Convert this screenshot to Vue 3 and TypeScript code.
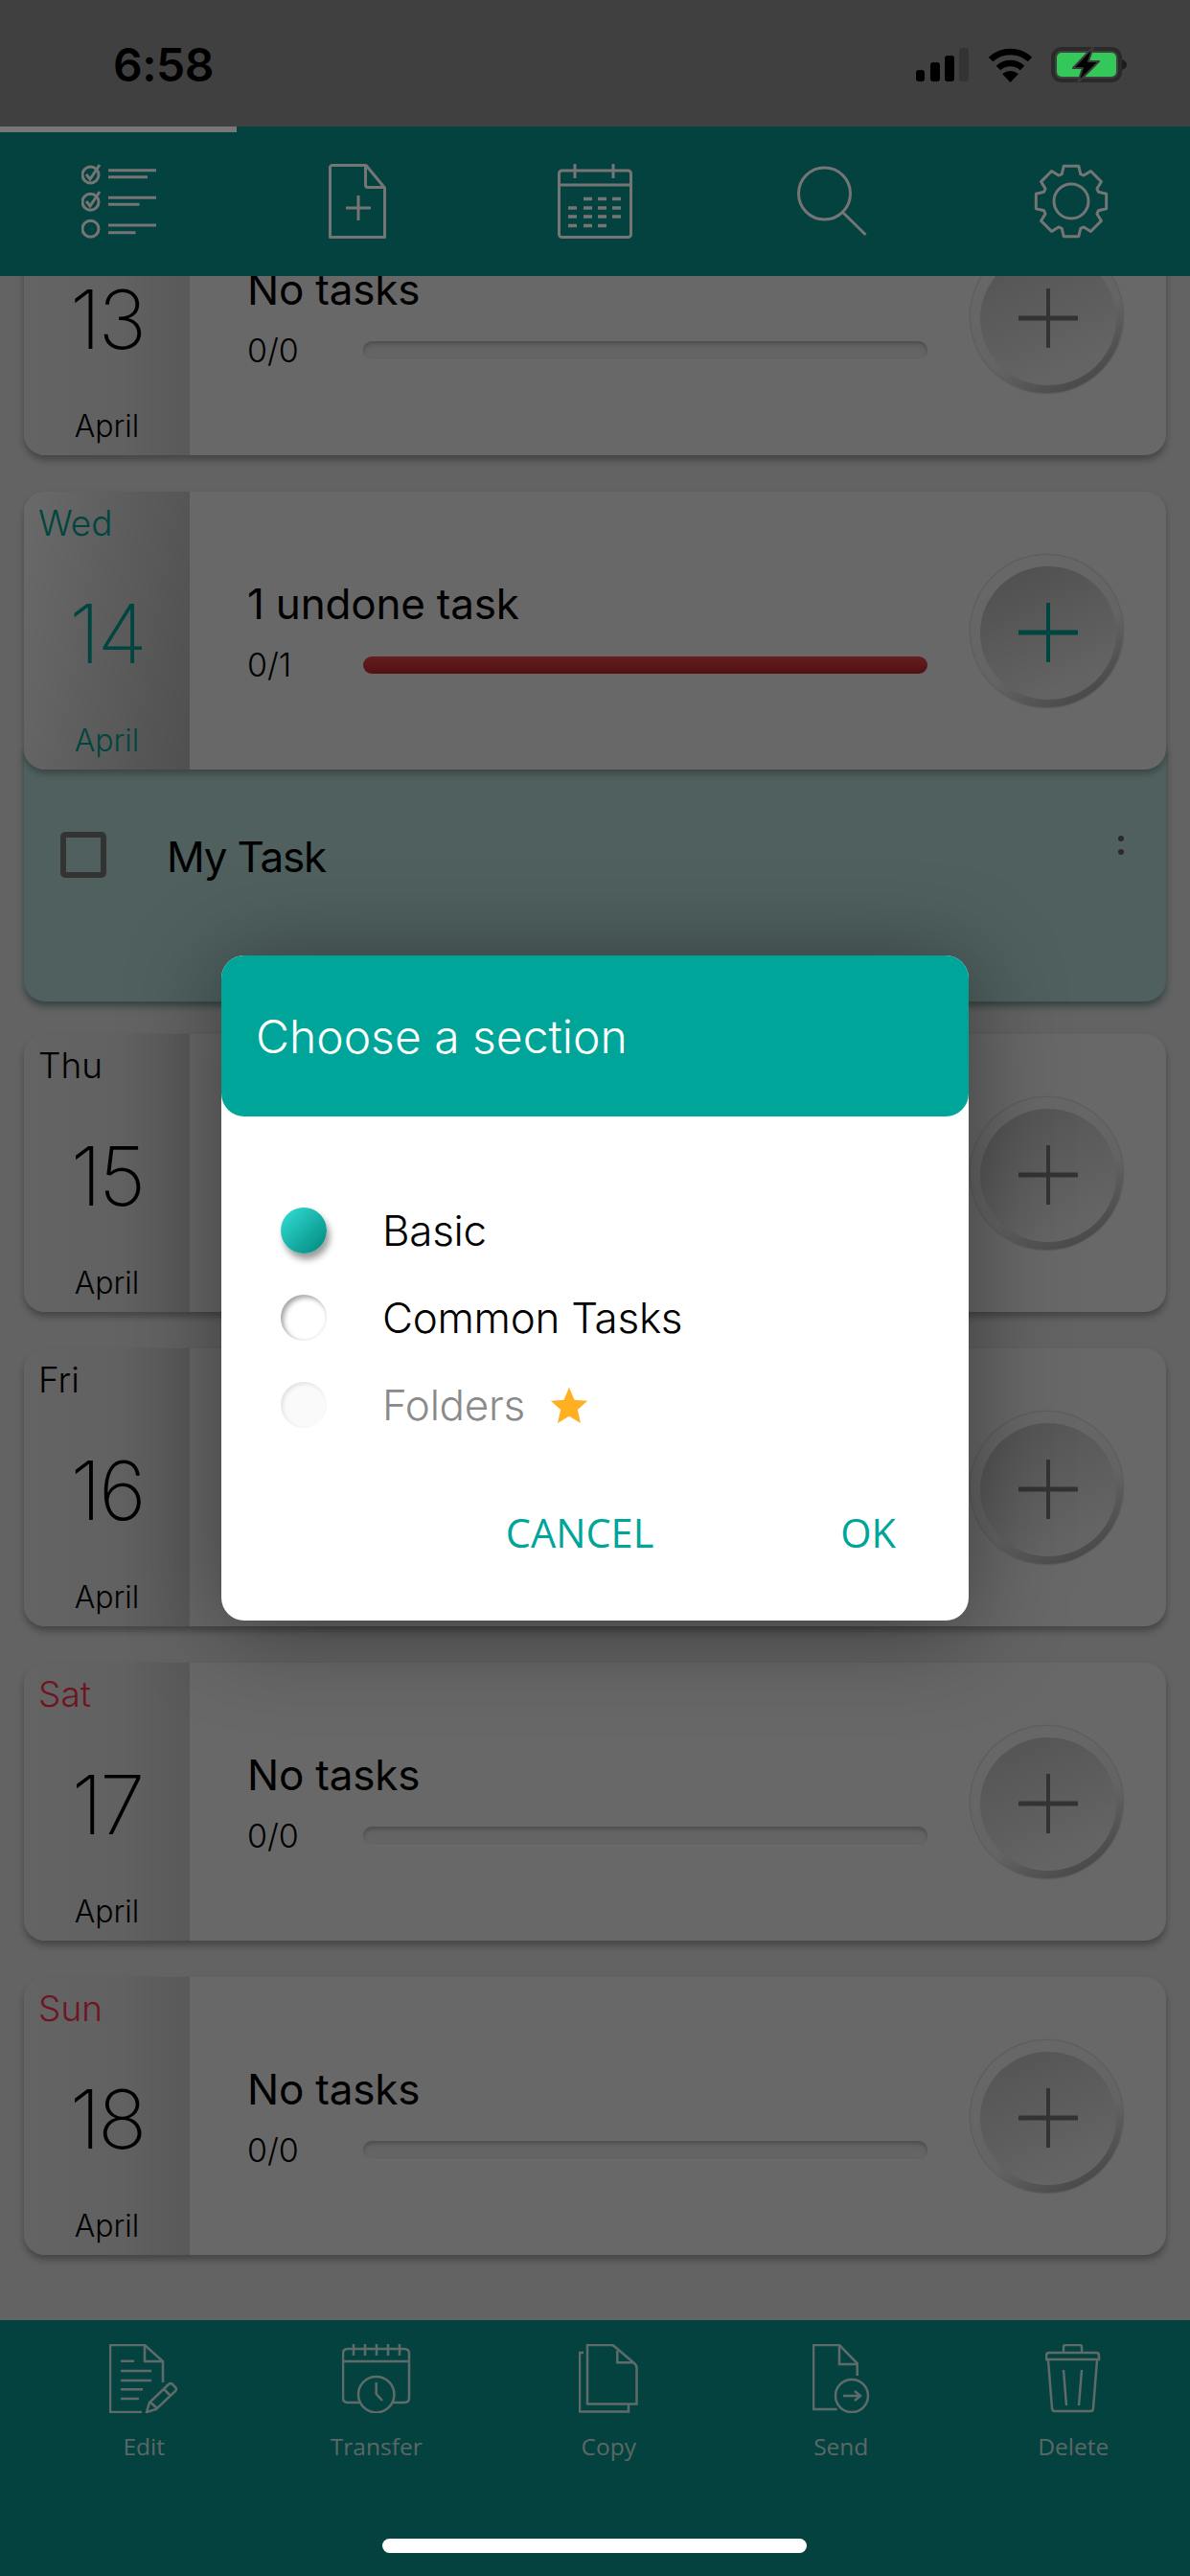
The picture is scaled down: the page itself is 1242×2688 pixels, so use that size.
<script setup lang="ts">
interface Day {
  name: string
  num: number
  title: string
  count: string
  tone: string
  active?: boolean
  open?: boolean
}

const days: Day[] = [
  { name: '', num: 13, title: 'No tasks', count: '0/0', tone: 'plain' },
  { name: 'Wed', num: 14, title: '1 undone task', count: '0/1', tone: 'today', active: true, open: true },
  { name: 'Thu', num: 15, title: 'No tasks', count: '0/0', tone: 'plain' },
  { name: 'Fri', num: 16, title: 'No tasks', count: '0/0', tone: 'plain' },
  { name: 'Sat', num: 17, title: 'No tasks', count: '0/0', tone: 'weekend' },
  { name: 'Sun', num: 18, title: 'No tasks', count: '0/0', tone: 'weekend' },
]

const gearPath = (() => {
  const c = 39
  const pt = (r: number, deg: number) => {
    const a = (deg * Math.PI) / 180
    return `${(c + r * Math.cos(a)).toFixed(2)} ${(c + r * Math.sin(a)).toFixed(2)}`
  }
  const parts: string[] = []
  for (let i = 0; i < 8; i++) {
    const a = i * 45 - 90
    parts.push(pt(30, a - 19), pt(37.5, a - 12), pt(37.5, a + 12), pt(30, a + 19))
  }
  return 'M' + parts.join(' L') + ' Z'
})()

const sections = [
  { label: 'Basic', state: 'on' },
  { label: 'Common Tasks', state: 'off' },
  { label: 'Folders', state: 'disabled', star: true },
]
</script>

<template>
  <div class="page">
    <div class="status">
      <span class="time">6:58</span>
      <div class="status-icons">
        <svg class="signal" width="55" height="35" viewBox="0 0 55 35">
          <rect x="0" y="23" width="9" height="12" rx="3" fill="#000" />
          <rect x="15" y="15" width="10" height="20" rx="3" fill="#000" />
          <rect x="30" y="8" width="10" height="27" rx="3" fill="#000" />
          <rect x="45" y="0" width="10" height="35" rx="3" fill="#333" />
        </svg>
        <svg class="wifi" width="47" height="37" viewBox="0 0 47 37">
          <path d="M3 13 A30 30 0 0 1 44 13" fill="none" stroke="#000" stroke-width="6.5" />
          <path d="M11 22 A18 18 0 0 1 36 22" fill="none" stroke="#000" stroke-width="6.5" />
          <path d="M15 28 Q23.5 22 32 28 L23.500 37 Z" fill="#000" />
        </svg>
        <svg class="battery" width="80" height="38" viewBox="0 0 80 38">
          <rect x="2" y="2" width="70" height="33" rx="9" fill="none" stroke="#2a2a2a" stroke-width="4" />
          <rect x="6" y="6" width="62" height="25" rx="5" fill="#34c75a" />
          <path d="M74 13 Q79 15 79 18.500 Q79 22 74 24 Z" fill="#1c1c1c" />
          <path d="M44 0 L23 22 H33 L28 37 L50 15 H39 Z" fill="#000" stroke="#3a3a3a" stroke-width="2" stroke-linejoin="round" />
        </svg>
      </div>
    </div>

    <header class="topbar">
      <span class="progress"></span>
      <nav class="top-nav">
        <svg width="78" height="78" viewBox="0 0 78 78" class="ico">
          <circle cx="9.500" cy="11.500" r="8.500" />
          <path d="M5 11 L9 16 L19 1" />
          <path d="M28 6.700 H78 M28 13.700 H69" />
          <circle cx="9.500" cy="39.700" r="8.500" />
          <path d="M5 39 L9 44 L19 29" />
          <path d="M28 35.300 H78 M28 42.300 H60.500" />
          <circle cx="9.500" cy="67.800" r="8.500" />
          <path d="M28 64 H78 M28 71.700 H56.500" />
        </svg>
        <svg width="60" height="78" viewBox="0 0 60 78" class="ico">
          <path d="M3 1.500 H39 L58.500 25 V76.500 H1.500 V3 Z" stroke-linejoin="round" />
          <path d="M38.500 1.500 V22 Q38.500 24.500 41 24.500 H58.500" />
          <path d="M31 33 V59 M18 46 H44" />
        </svg>
        <svg width="78" height="78" viewBox="0 0 78 78" class="ico">
          <rect x="1.500" y="7" width="75" height="69.500" rx="3" />
          <path d="M1.500 22 H76.500" />
          <path d="M18 0 V15 M58 0 V15" />
          <path class="dash" d="M27 36.500 H36 M42 36.500 H51 M57 36.500 H66 M11 46 H20 M27 46 H36 M42 46 H51 M57 46 H66 M11 55 H20 M27 55 H36 M42 55 H51 M57 55 H66 M11 64.500 H20 M27 64.500 H36 M42 64.500 H51" />
        </svg>
        <svg width="74" height="74" viewBox="0 0 74 74" class="ico">
          <circle cx="28.500" cy="29" r="27" />
          <path d="M47 48 L71.500 72" />
        </svg>
        <svg width="78" height="78" viewBox="0 0 78 78" class="ico">
          <path :d="gearPath" stroke-linejoin="round" />
          <circle cx="39" cy="39" r="18" />
        </svg>
      </nav>
    </header>

    <main class="list">
      <section v-for="day in days" :key="day.num" class="day" :class="{ 'is-open': day.open }">
        <div class="card">
          <div class="date" :class="[day.tone, { active: day.active }]">
            <span class="weekday">{{ day.name }}</span>
            <span class="num">{{ day.num }}</span>
            <span class="month">April</span>
          </div>
          <div class="summary">
            <div class="title">{{ day.title }}</div>
            <div class="count-row">
              <span class="count">{{ day.count }}</span>
              <span class="track" :class="{ undone: day.active }"></span>
            </div>
          </div>
          <button class="add" :class="{ 'add-active': day.active }" type="button">
            <span class="add-inner">
              <svg width="62" height="62" viewBox="0 0 62 62">
                <path d="M31 0 V62" stroke-width="4" />
                <path d="M0 31 H62" stroke-width="5" />
              </svg>
            </span>
          </button>
        </div>
        <div v-if="day.open" class="task-panel">
          <span class="check"></span>
          <span class="task-name">My Task</span>
          <span class="more"><i></i><i></i></span>
        </div>
      </section>
    </main>

    <footer class="bottombar">
      <div class="bottom-nav">
        <div class="tool">
          <svg width="72" height="72" viewBox="0 0 72 72" class="ico thin">
            <path d="M56 40 V18 L37 1 H1 V71 H34" />
            <path d="M37 1 V18 H56" />
            <path d="M12 17.700 H26 M12 28 H44 M12 38 H44 M12 47.300 H35 M12 57 H31" />
            <path d="M39 71 L42 61 L62 42 Q64 40 66 42 L69 45 Q71 47 69 49 L49 68 Z" />
            <path d="M42 60 L50 67 M57 47 L64 54" />
          </svg>
          <span>Edit</span>
        </div>
        <div class="tool">
          <svg width="72" height="72" viewBox="0 0 72 72" class="ico thin">
            <path d="M18 61 H6 Q1 61 1 56 V10 Q1 5 6 5 H65 Q70 5 70 10 V56 Q70 61 65 61 H53" />
            <path d="M1 18 H70" />
            <path d="M12 0 V12 M24 0 V12 M36 0 V12 M48 0 V12 M60 0 V12" />
            <circle cx="35.700" cy="52.700" r="18.700" />
            <path d="M35.700 40 V52 L42 59" />
          </svg>
          <span>Transfer</span>
        </div>
        <div class="tool">
          <svg width="62" height="72" viewBox="0 0 62 72" class="ico thin">
            <path d="M5 9 H1 V70.500 H52 V62.500" />
            <path d="M9 62.500 V1 H34 Q36 1 38 3 L58 20 Q60.500 22 60.500 25 V62.500 Z" />
            <path d="M40.300 6.700 V19.300 H57.300" />
          </svg>
          <span>Copy</span>
        </div>
        <div class="tool">
          <svg width="60" height="72" viewBox="0 0 60 72" class="ico thin">
            <path d="M25.700 68 H1 V1 H28 L46.700 20 V33" />
            <path d="M28 1 V21 H46.700" />
            <circle cx="41" cy="54" r="17" />
            <path d="M32 54 H50 M44 49 L50 54 L44 59" />
          </svg>
          <span>Send</span>
        </div>
        <div class="tool">
          <svg width="58" height="72" viewBox="0 0 58 72" class="ico thin">
            <path d="M19 9 V3 Q19 1 21 1 H36 Q38 1 38 3 V9" />
            <path d="M1 16 V12 Q1 9 4 9 H53 Q56 9 56 12 V16 Z" />
            <path d="M3 17 L7 67 Q7 70 10 70 H47 Q50 70 50 67 L54 17" />
            <path d="M19 27 L22 64 M38 27 L35 64" />
          </svg>
          <span>Delete</span>
        </div>
      </div>
    </footer>

    <div class="scrim">
      <div class="dialog">
        <h2 class="dialog-title">Choose a section</h2>
        <ul class="options">
          <li v-for="s in sections" :key="s.label" class="option" :class="s.state">
            <span class="radio"></span>
            <span class="label">{{ s.label }}</span>
            <svg v-if="s.star" class="star" width="40" height="40" viewBox="0 0 24 24">
              <path d="M12 0.500 L15.300 8.200 L23.500 8.900 L17.300 14.400 L19.200 22.800 L12 18.400 L4.800 22.800 L6.700 14.400 L0.500 8.900 L8.700 8.200 Z" fill="#ffb020" />
            </svg>
          </li>
        </ul>
        <div class="actions">
          <button type="button">CANCEL</button>
          <button type="button">OK</button>
        </div>
      </div>
    </div>

    <span class="home"></span>
  </div>
</template>

<style>
html, body { margin: 0; background: #636363; }
</style>

<style scoped>
.page {
  position: relative;
  width: 1242px;
  height: 2688px;
  overflow: hidden;
  display: flex;
  flex-direction: column;
  background: #c6c6c6;
  font-family: Inter, "Noto Sans", sans-serif;
  font-weight: 300;
  color: #000;
}

/* status bar sits above the scrim */
.status {
  position: relative;
  z-index: 3;
  flex: 0 0 132px;
  box-sizing: border-box;
  background: #404040;
  display: flex;
  align-items: flex-start;
  justify-content: space-between;
  padding: 49px 65px 0 118px;
}
.time {
  font-family: Inter, sans-serif;
  font-weight: 600;
  font-size: 48px;
  line-height: 38px;
  letter-spacing: -0.5px;
}
.status-icons { display: flex; align-items: flex-start; gap: 20px; }
.status-icons .signal { margin-top: 1px; }
.status-icons .battery { margin-left: -1px; }

.topbar {
  position: relative;
  flex: 0 0 156px;
  z-index: 2;
  background: #06847e;
}
.progress {
  position: absolute;
  left: 0;
  top: 0;
  width: 247px;
  height: 6px;
  background: #eeeeee;
}
.top-nav {
  display: grid;
  grid-template-columns: repeat(5, 1fr);
  justify-items: center;
  align-items: center;
  padding-top: 39px;
}
.ico { fill: none; stroke: #eaeaea; stroke-width: 3; display: block; }
.ico .dash { stroke-width: 3.500; }
.ico.thin { stroke: #bed6d2; stroke-width: 2.500; }

.list {
  flex: 1;
  min-height: 0;
  display: flex;
  flex-direction: column;
  gap: 38px;
  margin-top: -103px;
  padding: 0 25px;
  position: relative;
  z-index: 1;
}
.card {
  position: relative;
  z-index: 1;
  height: 290px;
  display: flex;
  align-items: center;
  border-radius: 22px;
  background: #d0d0d0;
  box-shadow: 0 5px 7px rgba(0, 0, 0, 0.3);
}
.day { position: relative; }
.day.is-open { margin-bottom: -4px; }

.date {
  flex: 0 0 173px;
  height: 100%;
  display: flex;
  flex-direction: column;
  border-radius: 22px 0 0 22px;
  background: linear-gradient(90deg, #c8c8c8, #c2c2c2 60%, #b2b2b2);
}
.date.active { background: linear-gradient(100deg, #d4d4d4, #a0a0a0); }
.weekday {
  height: 44px;
  margin-top: 11px;
  padding-left: 15px;
  font-size: 37px;
  line-height: 44px;
}
.num {
  margin-top: 44px;
  height: 100px;
  text-align: center;
  font-size: 85px;
  line-height: 100px;
  font-weight: 200;
  letter-spacing: -3px;
}
.month {
  margin-top: 41px;
  height: 40px;
  text-align: center;
  font-size: 32px;
  line-height: 40px;
}
.today .weekday, .today .num, .today .month { color: #008a7e; }
.weekend .weekday { color: #dc2a42; }

.summary {
  flex: 1;
  align-self: flex-start;
  padding: 89px 45px 0 60px;
}
.title { font-size: 44px; line-height: 56px; font-weight: 400; letter-spacing: -0.2px; }
.count-row { display: flex; align-items: center; margin-top: 14px; height: 44px; }
.count { flex: 0 0 121px; font-size: 34px; line-height: 44px; }
.track {
  flex: 1;
  height: 20px;
  border-radius: 9px;
  background: #c8c8c8;
  box-shadow: inset 0 3px 4px rgba(0, 0, 0, 0.22), inset 0 -1px 1px rgba(255, 255, 255, 0.3);
}
.track.undone {
  height: 18px;
  background: linear-gradient(180deg, #ce3a3e, #a02226);
  box-shadow: none;
}

.add {
  flex: 0 0 159px;
  width: 159px;
  height: 159px;
  margin-right: 45px;
  padding: 12px 7px 8px 10px;
  border: 0;
  border-radius: 50%;
  box-sizing: border-box;
  background: linear-gradient(150deg, #cecece 20%, #c8c8c8 60%, #8e8e8e 90%);
  box-shadow: 0 0 2px rgba(0, 0, 0, 0.45);
}
.add-inner {
  width: 100%;
  height: 100%;
  display: flex;
  align-items: center;
  justify-content: center;
  border-radius: 50%;
  background: linear-gradient(155deg, #a6a6a6, #c8c8c8 80%);
}
.add-active .add-inner { background: linear-gradient(155deg, #9c9c9c, #c6c6c6 80%); }
.add svg { stroke: #666666; fill: none; display: block; }
.add-active svg { stroke: #008a7e; }

.is-open .card { box-shadow: 0 4px 6px rgba(0, 0, 0, 0.28); }
.task-panel {
  margin-top: -24px;
  height: 266px;
  box-sizing: border-box;
  padding: 89px 38px 0 38px;
  display: flex;
  align-items: flex-start;
  background: #9ec0bd;
  border-radius: 0 0 22px 22px;
  box-shadow: 0 5px 7px rgba(0, 60, 55, 0.45);
}
.check {
  flex: 0 0 48px;
  height: 48px;
  box-sizing: border-box;
  border: 6px solid #666666;
  border-radius: 5px;
}
.task-name {
  margin-left: 63px;
  flex: 1;
  font-size: 44px;
  line-height: 52px;
  font-weight: 400;
  letter-spacing: -1.2px;
}
.more {
  display: flex;
  flex-direction: column;
  gap: 8px;
  margin-top: 4px;
  margin-right: 6px;
}
.more i { width: 6px; height: 6px; border-radius: 50%; background: #555555; }

.bottombar {
  position: relative;
  z-index: 2;
  flex: 0 0 267px;
  background: #06847e;
}
.bottom-nav {
  display: grid;
  grid-template-columns: repeat(5, 242.5px);
  padding: 25px 0 0 29px;
}
.tool {
  display: flex;
  flex-direction: column;
  align-items: center;
  gap: 18px;
  font-family: "Open Sans", sans-serif;
  font-weight: 400;
  font-size: 24.500px;
  line-height: 34px;
  color: #b4cfcb;
}

.scrim {
  position: absolute;
  inset: 0;
  z-index: 2;
  display: flex;
  align-items: center;
  justify-content: center;
  background: rgba(0, 0, 0, 0.5);
}
.dialog {
  width: 780px;
  height: 694px;
  display: flex;
  flex-direction: column;
  background: #fff;
  border-radius: 24px;
  box-shadow: 0 10px 100px rgba(0, 0, 0, 0.4);
}
.dialog-title {
  margin: 0;
  height: 168px;
  flex: 0 0 168px;
  box-sizing: border-box;
  padding-left: 36px;
  display: flex;
  align-items: center;
  background: #00a59a;
  border-radius: 24px;
  color: #fff;
  font-size: 48px;
  font-weight: 300;
}
.options {
  margin: 0;
  padding: 73px 0 0 62px;
  list-style: none;
  display: flex;
  flex-direction: column;
}
.option {
  height: 91px;
  display: flex;
  align-items: center;
  font-size: 44px;
  letter-spacing: -0.3px;
}
.label { margin-left: 58px; }
.radio {
  flex: 0 0 48px;
  height: 48px;
  border-radius: 50%;
}
.on .radio {
  background: linear-gradient(135deg, #33e0d6, #00857c);
  box-shadow: 3px 6px 7px rgba(0, 0, 0, 0.4);
}
.off .radio {
  background: #fff;
  box-shadow: inset 3px 3px 5px rgba(0, 0, 0, 0.35), inset -1px -1px 3px rgba(0, 0, 0, 0.06);
}
.disabled .radio {
  background: #fafafa;
  box-shadow: inset 2px 2px 4px rgba(0, 0, 0, 0.1);
}
.disabled .label { color: #8a8a8a; }
.star { margin-left: 26px; margin-top: 2px; }

.actions {
  margin-top: 61px;
  display: flex;
  justify-content: flex-end;
  gap: 195px;
  padding-right: 76px;
}
.actions button {
  padding: 0;
  border: 0;
  background: none;
  font-family: "Open Sans", sans-serif;
  font-weight: 400;
  font-size: 41.500px;
  line-height: 54px;
  color: #00a59a;
}

.home {
  position: absolute;
  z-index: 3;
  left: 399px;
  top: 2649px;
  width: 443px;
  height: 15px;
  border-radius: 8px;
  background: #fff;
}
</style>
